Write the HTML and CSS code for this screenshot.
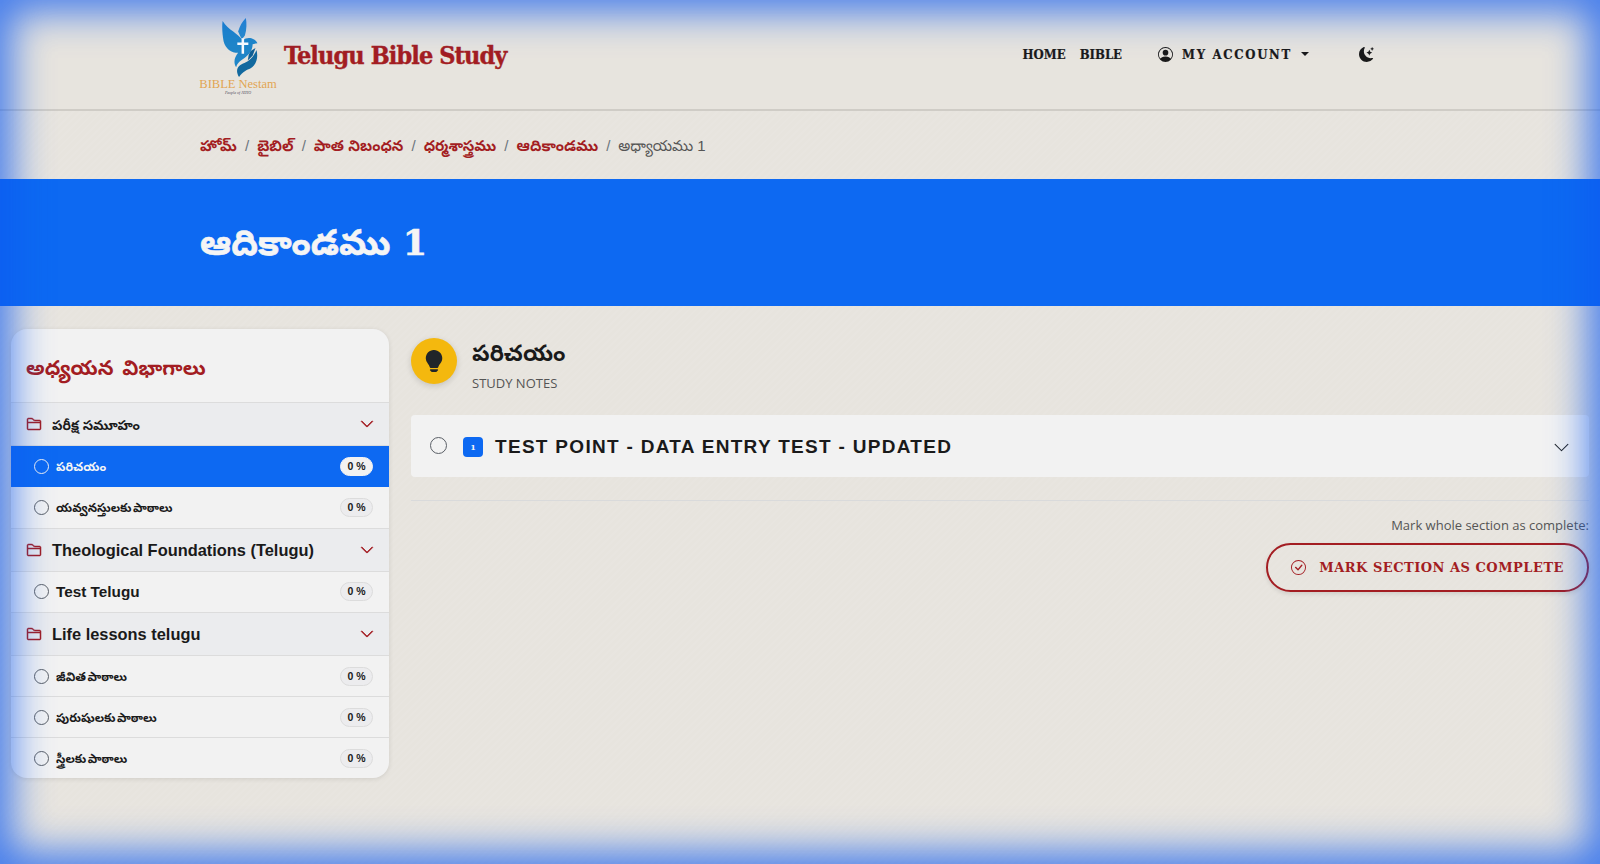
FILE: index.html
```html
<!DOCTYPE html>
<html lang="te">

<head>
    <meta charset="utf-8">
    <meta name="viewport" content="width=device-width">
    <link rel="stylesheet" href="styles.css">
    <title>ఆదికాండము 1 - Telugu Bible Study</title>
</head>

<body>
    <svg class="icon-defs" aria-hidden="true">
        <symbol id="i-folder" viewBox="0 0 16 16">
            <path d="M1 3.5A1.5 1.5 0 0 1 2.5 2h2.764c.958 0 1.76.56 2.311 1.184C7.985 3.648 8.48 4 9 4h4.5A1.5 1.5 0 0 1 15 5.5v7a1.5 1.5 0 0 1-1.5 1.5h-11A1.5 1.5 0 0 1 1 12.5v-9zM2.5 3a.5.5 0 0 0-.5.5V6h12v-.5a.5.5 0 0 0-.5-.5H9c-.964 0-1.71-.629-2.174-1.154C6.374 3.334 5.82 3 5.264 3H2.5zM14 7H2v5.5a.5.5 0 0 0 .5.5h11a.5.5 0 0 0 .5-.5V7z"/>
        </symbol>
        <symbol id="i-chevron" viewBox="0 0 16 16">
            <path fill-rule="evenodd" d="M1.646 4.646a.5.5 0 0 1 .708 0L8 10.293l5.646-5.647a.5.5 0 0 1 .708.708l-6 6a.5.5 0 0 1-.708 0l-6-6a.5.5 0 0 1 0-.708z"/>
        </symbol>
    </svg>

    <header class="topbar">
        <div class="container topbar-inner">
            <a class="brand" href="#">
                <span class="logo">
                    <svg class="logo-mark" viewBox="0 0 44 62">
                        <!-- far wing, near wing, body -->
                        <path fill="#2a8ccb" d="M27 0c1 5 1 12-1 18l-3 4c-2-3-3-6-4-8 2-6 4-10 8-14z"/>
                        <path fill="#1f86c8" d="M3 3c3 5 7 8 11 11 4 3 7 6 10 9 3-3 8-3 11-1 2 1 3 2 4 4l-5 1c0 6-3 10-8 14-4 3-8 5-9 10-3-5-2-10 2-15-7 0-13-4-15-12C3 18 2 10 3 3z"/>
                        <path fill="#fff" d="M22.6 21h2.6v4.4h4.4v2.4h-4.4V37h-2.6v-9.2h-4.4v-2.4h4.4z"/>
                        <!-- cupped hand -->
                        <path fill="#12699f" d="M38 33c2 8 0 15-6 19-4 2-8 3-12 9-2-3-3-7-1-10 3-4 7-4 11-7 3-2 6-6 8-11z"/>
                        <path fill="#0f5f95" d="M32 34l5-3-3 8-5 5 1-6z"/>
                    </svg>
                    <span class="logo-name">BIBLE Nestam</span>
                    <span class="logo-tag">People of JEHO</span>
                </span>
                <span class="brand-title">Telugu Bible Study</span>
            </a>
            <nav class="topnav">
                <a href="#">HOME</a>
                <a href="#">BIBLE</a>
                <a class="account" href="#">
                    <svg class="account-icon" viewBox="0 0 16 16" fill="currentColor">
                        <path d="M11 6a3 3 0 1 1-6 0 3 3 0 0 1 6 0z"/>
                        <path fill-rule="evenodd" d="M0 8a8 8 0 1 1 16 0A8 8 0 0 1 0 8zm8-7a7 7 0 0 0-5.468 11.37C3.242 11.226 4.805 10 8 10s4.757 1.225 5.468 2.37A7 7 0 0 0 8 1z"/>
                    </svg>
                    MY ACCOUNT
                    <span class="caret"></span>
                </a>
                <a class="theme" href="#">
                    <svg class="theme-icon" viewBox="0 0 16 16" fill="currentColor">
                        <path d="M6 .278a.768.768 0 0 1 .08.858 7.208 7.208 0 0 0-.878 3.46c0 4.021 3.278 7.277 7.318 7.277.527 0 1.04-.055 1.533-.16a.787.787 0 0 1 .81.316.733.733 0 0 1-.031.893A8.349 8.349 0 0 1 8.344 16C3.734 16 0 12.286 0 7.71 0 4.266 2.114 1.312 5.124.06A.752.752 0 0 1 6 .278z"/>
                        <path d="M10.794 3.148a.217.217 0 0 1 .412 0l.387 1.162c.173.518.579.924 1.097 1.097l1.162.387a.217.217 0 0 1 0 .412l-1.162.387a1.734 1.734 0 0 0-1.097 1.097l-.387 1.162a.217.217 0 0 1-.412 0l-.387-1.162A1.734 1.734 0 0 0 9.31 6.593l-1.162-.387a.217.217 0 0 1 0-.412l1.162-.387a1.734 1.734 0 0 0 1.097-1.097l.387-1.162zM13.863.099a.145.145 0 0 1 .274 0l.258.774c.115.346.386.617.732.732l.774.258a.145.145 0 0 1 0 .274l-.774.258a1.156 1.156 0 0 0-.732.732l-.258.774a.145.145 0 0 1-.274 0l-.258-.774a1.156 1.156 0 0 0-.732-.732l-.774-.258a.145.145 0 0 1 0-.274l.774-.258c.346-.115.617-.386.732-.732L13.863.1z"/>
                    </svg>
                </a>
            </nav>
        </div>
    </header>

    <div class="crumbs">
        <ol class="container crumb-list">
            <li><a href="#">హోమ్</a></li>
            <li><a href="#">బైబిల్</a></li>
            <li><a href="#">పాత నిబంధన</a></li>
            <li><a href="#">ధర్మశాస్త్రము</a></li>
            <li><a href="#">ఆదికాండము</a></li>
            <li>అధ్యాయము 1</li>
        </ol>
    </div>

    <section class="banner">
        <h1 class="container banner-title">ఆదికాండము 1</h1>
    </section>

    <main class="page">
        <aside class="sidebar">
            <h2 class="sidebar-title">అధ్యయన విభాగాలు</h2>

            <div class="group">
                <svg class="folder"><use href="#i-folder"/></svg>
                <span class="group-name te">పరీక్ష సమూహం</span>
                <svg class="group-chevron"><use href="#i-chevron"/></svg>
            </div>
            <a class="item item-active" href="#">
                <span class="radio"></span>
                <span class="item-name te">పరిచయం</span>
                <span class="pct">0 %</span>
            </a>
            <a class="item" href="#">
                <span class="radio"></span>
                <span class="item-name te">యవ్వనస్తులకు పాఠాలు</span>
                <span class="pct">0 %</span>
            </a>

            <div class="group">
                <svg class="folder"><use href="#i-folder"/></svg>
                <span class="group-name">Theological Foundations (Telugu)</span>
                <svg class="group-chevron"><use href="#i-chevron"/></svg>
            </div>
            <a class="item" href="#">
                <span class="radio"></span>
                <span class="item-name">Test Telugu</span>
                <span class="pct">0 %</span>
            </a>

            <div class="group">
                <svg class="folder"><use href="#i-folder"/></svg>
                <span class="group-name">Life lessons telugu</span>
                <svg class="group-chevron"><use href="#i-chevron"/></svg>
            </div>
            <a class="item" href="#">
                <span class="radio"></span>
                <span class="item-name te">జీవిత పాఠాలు</span>
                <span class="pct">0 %</span>
            </a>
            <a class="item" href="#">
                <span class="radio"></span>
                <span class="item-name te">పురుషులకు పాఠాలు</span>
                <span class="pct">0 %</span>
            </a>
            <a class="item item-last" href="#">
                <span class="radio"></span>
                <span class="item-name te">స్త్రీలకు పాఠాలు</span>
                <span class="pct">0 %</span>
            </a>
        </aside>

        <section class="content">
            <div class="section-head">
                <span class="bulb">
                    <svg viewBox="0 0 16 16" fill="currentColor">
                        <path d="M2 6a6 6 0 1 1 10.174 4.31c-.203.196-.359.4-.453.619l-.762 1.769A.5.5 0 0 1 10.5 13h-5a.5.5 0 0 1-.46-.302l-.761-1.77a1.964 1.964 0 0 0-.453-.618A5.984 5.984 0 0 1 2 6zm3 8.5a.5.5 0 0 1 .5-.5h5a.5.5 0 0 1 0 1l-.224.447a1 1 0 0 1-.894.553H6.618a1 1 0 0 1-.894-.553L5.5 15a.5.5 0 0 1-.5-.5z"/>
                    </svg>
                </span>
                <div>
                    <h2 class="section-title">పరిచయం</h2>
                    <div class="section-sub">STUDY NOTES</div>
                </div>
            </div>

            <div class="point">
                <span class="radio radio-big"></span>
                <span class="point-num">1</span>
                <span class="point-title">TEST POINT - DATA ENTRY TEST - UPDATED</span>
                <svg class="point-chevron"><use href="#i-chevron"/></svg>
            </div>

            <hr class="divider">

            <div class="complete">
                <div class="complete-label">Mark whole section as complete:</div>
                <a class="complete-btn" href="#">
                    <svg viewBox="0 0 16 16" fill="currentColor">
                        <path d="M8 15A7 7 0 1 1 8 1a7 7 0 0 1 0 14zm0 1A8 8 0 1 0 8 0a8 8 0 0 0 0 16z"/>
                        <path d="M10.97 4.97a.235.235 0 0 0-.02.022L7.477 9.417 5.384 7.323a.75.75 0 0 0-1.06 1.06L6.97 11.03a.75.75 0 0 0 1.079-.02l3.992-4.99a.75.75 0 0 0-1.071-1.05z"/>
                    </svg>
                    MARK SECTION AS COMPLETE
                </a>
            </div>
        </section>
    </main>

    <div class="glow"></div>
</body>

</html>
```

FILE: styles.css
```css
* {
    box-sizing: border-box;
}

html,
body {
    height: 100%;
}

body {
    margin: 0;
    overflow: hidden;
    color: #1a1a1a;
    font-family: "Liberation Sans", "Noto Sans Telugu", sans-serif;
    background-color: #e7e4de;
    background-image: repeating-linear-gradient(135deg, rgba(255, 255, 255, 0.05) 0 2px, transparent 2px 5px);
}

a {
    color: inherit;
    text-decoration: none;
}

.icon-defs {
    display: none;
}

.container {
    width: 1200px;
    margin: 0 auto;
}

/* top bar */
.topbar {
    height: 111px;
    background: #e7e4de;
    border-bottom: 2px solid #cfccc6;
}

.topbar-inner {
    display: flex;
    align-items: center;
    height: 109px;
}

.brand {
    display: flex;
    align-items: center;
    gap: 8px;
}

.logo {
    display: flex;
    flex-direction: column;
    align-items: center;
    width: 76px;
}

.logo-mark {
    width: 44px;
    height: 60px;
    margin: 3px 0 0 5px;
}

.logo-name {
    color: #e2a452;
    font: 12.5px/12px "Liberation Serif", serif;
    white-space: nowrap;
}

.logo-tag {
    color: #4a4a5a;
    font: italic 4px/5px "Liberation Serif", serif;
}

.brand-title {
    padding-top: 1px;
    color: #a31d22;
    font: bold 25px "DejaVu Serif Condensed", "DejaVu Serif", serif;
    letter-spacing: -0.9px;
    -webkit-text-stroke: 0.4px #a31d22;
    white-space: nowrap;
}

.topnav {
    display: flex;
    align-items: center;
    margin-left: 516px;
    margin-top: -1px;
    font: bold 13px "DejaVu Serif Condensed", "DejaVu Serif", serif;
    -webkit-text-stroke: 0.2px #1a1a1a;
    gap: 14px;
}

.account {
    display: flex;
    align-items: center;
    margin-left: 22px;
    letter-spacing: 1.7px;
    gap: 9px;
}

.account-icon {
    width: 15px;
    height: 15px;
}

.caret {
    width: 0;
    height: 0;
    margin-left: 0;
    border: 4px solid transparent;
    border-top-color: #1a1a1a;
    border-bottom: 0;
}

.theme {
    display: flex;
    margin-left: 36px;
}

.theme-icon {
    width: 15px;
    height: 15px;
}

/* breadcrumb */
.crumbs {
    height: 68px;
    padding-top: 23px;
}

.crumb-list {
    display: flex;
    padding: 0;
    list-style: none;
    color: #555;
    font-size: 15px;
    line-height: 24px;
}

.crumb-list li + li::before {
    content: "/";
    padding: 0 8px;
    color: #6c757d;
}

.crumb-list a {
    color: #a31d22;
    font-weight: bold;
}

/* blue banner */
.banner {
    display: flex;
    align-items: center;
    height: 127px;
    background: #0d69f2;
}

.banner-title {
    margin: 0 auto;
    padding-top: 8px;
    color: #f5f5f5;
    font: bold 35px "DejaVu Serif", "Noto Sans Telugu", serif;
    -webkit-text-stroke: 0.6px #f5f5f5;
}

/* page body */
.page {
    display: flex;
    align-items: flex-start;
    gap: 22px;
    padding: 23px 11px 0 11px;
}

.sidebar {
    flex: none;
    width: 378px;
    overflow: hidden;
    background: #f2f2f2;
    border-radius: 16px;
    box-shadow: 0 1px 5px rgba(0, 0, 0, 0.1);
}

.sidebar-title {
    height: 74px;
    margin: 0;
    padding: 0 15px;
    color: #a31d22;
    font-size: 20.5px;
    line-height: 78px;
    word-spacing: 3px;
    border-bottom: 1px solid #dcdcdc;
}

.group {
    display: flex;
    align-items: center;
    height: 43px;
    padding: 0 15px;
    background: #ebecee;
    border-bottom: 1px solid #dcdcdc;
}

.folder {
    flex: none;
    width: 16px;
    height: 16px;
    fill: #a31d22;
    stroke: #a31d22;
    stroke-width: 0.5;
}

.group-name {
    flex: 1;
    margin-left: 10px;
    padding-top: 2px;
    font-size: 16.4px;
    font-weight: bold;
}

.group-name.te {
    padding-top: 6px;
    font-size: 13.5px;
}

.group-chevron {
    flex: none;
    width: 14px;
    height: 14px;
    fill: #a31d22;
    stroke: #a31d22;
    stroke-width: 0.8;
}

.item {
    display: flex;
    align-items: center;
    height: 41.3px;
    padding: 0 16px 0 23px;
    font-size: 15.3px;
    font-weight: bold;
    border-bottom: 1px solid #dcdcdc;
}

.item-last {
    height: 40px;
    border-bottom: 0;
}

.item-active {
    color: #f5f5f5;
    background: #0d69f2;
    border-bottom: 0;
}

.radio {
    flex: none;
    width: 15px;
    height: 15px;
    border: 1px solid #5a5f66;
    border-radius: 50%;
    background: #f2f2f2;
}

.item-active .radio {
    background: transparent;
    border-color: #f2f2f2;
}

.item-name {
    flex: 1;
    margin-left: 7px;
    padding-top: 1px;
}

.item-name.te {
    padding-top: 4px;
    font-size: 12.2px;
    word-spacing: -2px;
}

.pct {
    width: 33px;
    height: 19px;
    color: #1a1a1a;
    font-size: 10.5px;
    line-height: 17px;
    text-align: center;
    background: #ececee;
    border: 1px solid #dcdcdc;
    border-radius: 10px;
}

.item-active .pct {
    background: #f2f2f2;
    border-color: #f2f2f2;
}

/* main column */
.content {
    flex: 1;
    min-width: 0;
    padding-top: 9px;
}

.section-head {
    display: flex;
    gap: 15px;
}

.bulb {
    display: flex;
    align-items: center;
    justify-content: center;
    flex: none;
    width: 46px;
    height: 46px;
    color: #212529;
    background: #f4b80e;
    border-radius: 50%;
    box-shadow: 0 2px 6px rgba(0, 0, 0, 0.15);
}

.bulb svg {
    width: 22px;
    height: 22px;
}

.section-title {
    margin: 0;
    font-size: 22.75px;
    line-height: 30px;
}

.section-sub {
    margin-top: 5px;
    color: #555;
    font: 13px/20px "Open Sans", sans-serif;
}

.point {
    display: flex;
    align-items: center;
    height: 62px;
    margin-top: 22px;
    padding: 0 19px 0 19px;
    background: #f2f2f2;
    border-radius: 4px;
}

.radio-big {
    width: 17px;
    height: 17px;
    margin-top: -2px;
}

.point-num {
    width: 20px;
    height: 20px;
    margin-top: 2px;
    margin-left: 16px;
    color: #f5f5f5;
    font: bold 8px/21px "DejaVu Serif", serif;
    text-align: center;
    background: #0d69f2;
    border-radius: 4px;
}

.point-title {
    flex: 1;
    margin-left: 12px;
    padding-top: 1px;
    font-size: 19px;
    font-weight: bold;
    letter-spacing: 1.3px;
}

.point-chevron {
    width: 17px;
    height: 17px;
    margin-top: 2px;
    fill: #212529;
}

.divider {
    height: 1px;
    margin: 23px 0 0;
    background: #d9dadb;
    border: 0;
}

.complete {
    display: flex;
    flex-direction: column;
    align-items: flex-end;
}

.complete-label {
    margin-top: 14px;
    color: #555;
    font: 13px/20px "Open Sans", sans-serif;
}

.complete-btn {
    display: flex;
    align-items: center;
    gap: 13px;
    height: 49px;
    margin-top: 8px;
    padding: 0 23px;
    color: #a31d22;
    font: bold 13px "DejaVu Serif", serif;
    letter-spacing: 0.5px;
    border: 2px solid #a31d22;
    border-radius: 25px;
    box-shadow: 0 2px 4px rgba(0, 0, 0, 0.1);
}

.complete-btn svg {
    width: 15px;
    height: 15px;
}

/* blue edge glow over the whole page */
.glow {
    position: fixed;
    inset: 0;
    pointer-events: none;
    box-shadow: inset 0 0 38px 12px rgba(13, 90, 240, 0.75);
}
```
